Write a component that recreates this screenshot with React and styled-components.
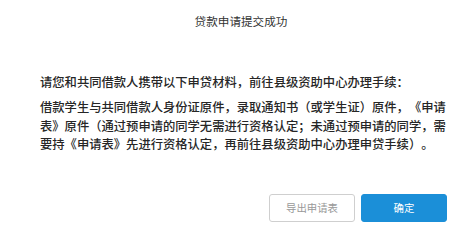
import React from 'react';
import styled, { createGlobalStyle } from 'styled-components';

const GlobalStyle = createGlobalStyle`
    html, body {
        margin: 0;
        padding: 0;
        background: #fff;
        overflow: hidden;
    }
    body {
        font-family: "Noto Sans CJK SC", "Noto Sans", sans-serif;
    }
`;

const Page = styled.div`
    width: 450px;
    height: 234px;
    overflow: hidden;
    background: #fff;
`;

const Dialog = styled.div`
    width: 482px;
    box-sizing: border-box;
    padding: 13px 35px 0 40px;
    display: flex;
    flex-direction: column;
`;

const Title = styled.h1`
    margin: 0 0 0 -40px;
    width: 482px;
    text-align: center;
    font-size: 11.6px;
    line-height: 16px;
    font-weight: normal;
    color: #333;
`;

const Body = styled.div`
    margin-top: 44px;
    width: 408px;
    font-size: 12.3px;
    line-height: 18.5px;
    font-weight: 500;
    color: #262626;
    text-spacing-trim: space-all;

    p {
        margin: 0;
    }
    p + p {
        margin-top: 6.5px;
    }
`;

const Footer = styled.div`
    margin-top: 40px;
    display: flex;
    justify-content: flex-end;
    gap: 6px;
`;

const Button = styled.button`
    width: 86px;
    height: 28px;
    box-sizing: border-box;
    border-radius: 3px;
    font-family: inherit;
    font-size: 10.4px;
    cursor: pointer;
    border: 1px solid ${p => (p.$primary ? '#1b8fd8' : '#cfcfcf')};
    background: ${p => (p.$primary ? '#1b8fd8' : '#fff')};
    color: ${p => (p.$primary ? '#fff' : '#999')};
`;

export default function App() {
    return (
        <Page>
            <GlobalStyle />
            <Dialog>
                <Title>贷款申请提交成功</Title>
                <Body>
                    <p>请您和共同借款人携带以下申贷材料，前往县级资助中心办理手续：</p>
                    <p>
                        借款学生与共同借款人身份证原件，录取通知书（或学生证）原件，《申请表》原件（通过预申请的同学无需进行资格认定；未通过预申请的同学，需要持《申请表》先进行资格认定，再前往县级资助中心办理申贷手续）。
                    </p>
                </Body>
                <Footer>
                    <Button>导出申请表</Button>
                    <Button $primary>确定</Button>
                </Footer>
            </Dialog>
        </Page>
    );
}
